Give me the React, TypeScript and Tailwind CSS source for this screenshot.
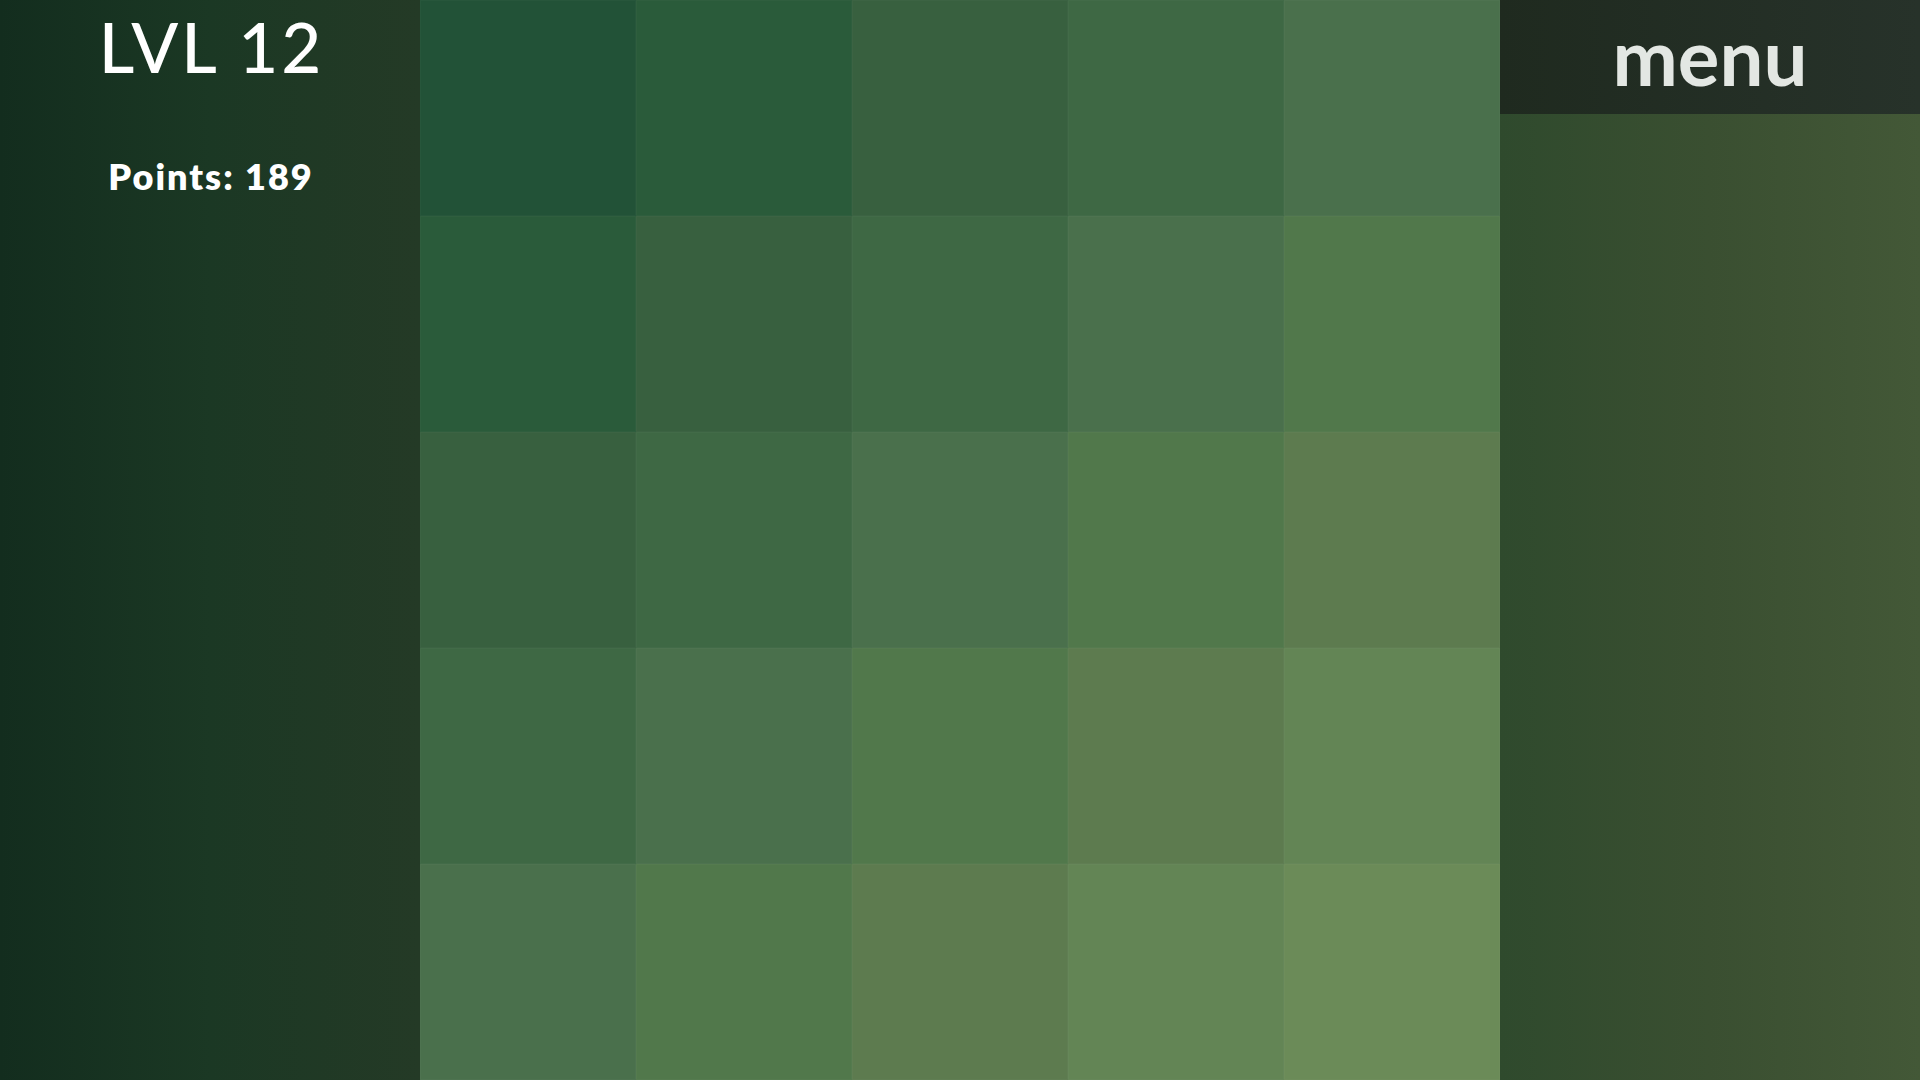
import React from "react";

const COLORS = [
  "bg-[#225237]",
  "bg-[#2a5b3a]",
  "bg-[#38603f]",
  "bg-[#3e6844]",
  "bg-[#4a704c]",
  "bg-[#51784b]",
  "bg-[#5d7b4f]",
  "bg-[#638555]",
  "bg-[#6b8b58]",
];

export default function App() {
  const cells: { key: string; cls: string }[] = [];
  for (let r = 0; r < 5; r++) {
    for (let c = 0; c < 5; c++) {
      cells.push({ key: `${r}-${c}`, cls: COLORS[r + c] });
    }
  }
  return (
    <div
      className="flex w-[1920px] h-[1080px] overflow-hidden"
      style={{ fontFamily: "Lato, 'Noto Sans', sans-serif" }}
    >
      <div className="w-[420px] h-full flex flex-col items-center bg-gradient-to-r from-[#132d1e] via-[#1b3824] to-[#243a26]">
        <div className="mt-[12px] text-[69px] leading-none text-white font-medium tracking-[3px] pl-[3px]">LVL 12</div>
        <div className="mt-[77px] text-[36px] leading-none text-white font-extrabold tracking-[2px] pl-[2px]">Points: 189</div>
      </div>
      <div className="w-[1080px] h-full grid grid-cols-5 grid-rows-5">
        {cells.map((cell) => (
          <div key={cell.key} className={`${cell.cls} border border-[#ffffff06]`} />
        ))}
      </div>
      <div className="w-[420px] h-full flex flex-col bg-gradient-to-r from-[#2f4a2d] via-[#3a4f31] to-[#435837]">
        <div className="h-[114px] flex items-center justify-center pb-[2px] bg-gradient-to-r from-[#1f2a1f] to-[#27322a]">
          <span className="text-[78px] leading-none font-bold text-[#e3e7e3]">menu</span>
        </div>
      </div>
    </div>
  );
}
